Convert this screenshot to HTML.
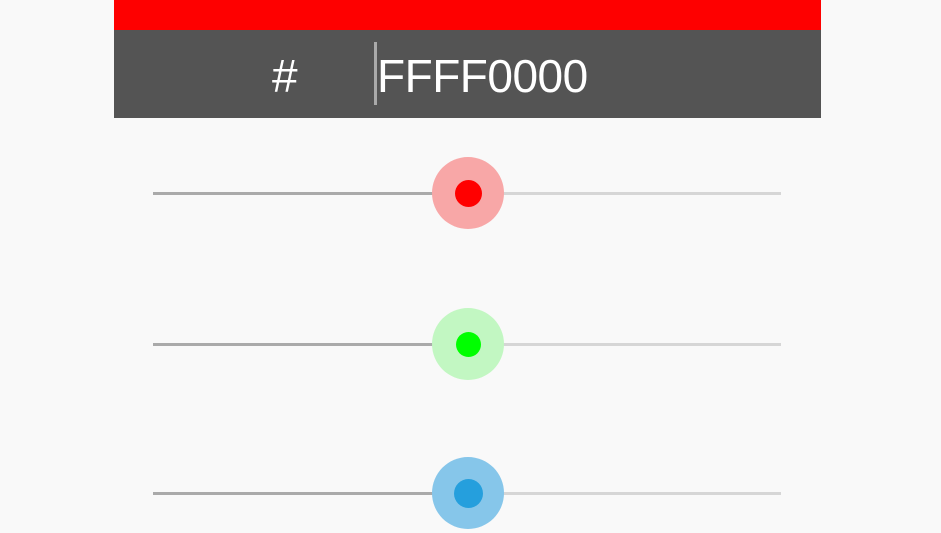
<!DOCTYPE html>
<html><head><style>
body{margin:0;width:941px;height:533px;background:#f9f9f9;position:relative;overflow:hidden;font-family:"Liberation Sans",sans-serif}
.red{position:absolute;left:114px;top:0;width:707px;height:30px;background:#fe0000}
.gray{position:absolute;left:114px;top:30px;width:707px;height:88px;background:#545454}
.t{position:absolute;color:#fff;font-size:46px;top:50px;line-height:52px}
.cur{position:absolute;left:374px;top:42px;width:3px;height:63px;background:#aaa}
.tl{position:absolute;left:153px;width:315px;height:3px;background:#aaa}
.tr{position:absolute;left:468px;width:313px;height:3px;background:#d6d6d6}
.h{position:absolute;left:432px;width:72px;height:72px;border-radius:50%}
.d{position:absolute;border-radius:50%}
</style></head><body>
<div class="red"></div>
<div class="gray"></div>
<div class="t" style="left:272px">#</div>
<div class="t" style="left:377px;letter-spacing:-0.5px">FFFF0000</div>
<div class="cur"></div>

<div class="tl" style="top:192px"></div><div class="tr" style="top:192px"></div>
<div class="h" style="top:157px;background:#f8a7a7"></div>
<div class="d" style="left:455px;top:180px;width:27px;height:27px;background:#f00"></div>

<div class="tl" style="top:343px"></div><div class="tr" style="top:343px"></div>
<div class="h" style="top:308px;background:#c2f7c2"></div>
<div class="d" style="left:456px;top:332px;width:25px;height:25px;background:#0f0"></div>

<div class="tl" style="top:492px"></div><div class="tr" style="top:492px"></div>
<div class="h" style="top:457px;background:#86c6ea"></div>
<div class="d" style="left:454px;top:479px;width:29px;height:29px;background:#259fdd"></div>
</body></html>
